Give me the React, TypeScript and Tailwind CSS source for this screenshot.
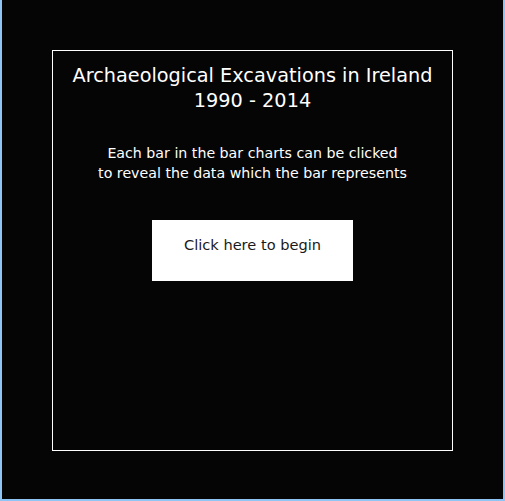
const App = () => {
  return (
    <div className="h-[501px] w-[505px] border-x-2 border-b-2 border-[#8ec5f5] bg-[#050505] pl-[50px] pt-[50px] font-['DejaVu_Sans',sans-serif]">
      <div className="flex h-[401px] w-[401px] flex-col items-center border border-white pt-[12px]">
        <h1 className="text-center text-[19.3px] leading-[25px] text-white">
          Archaeological Excavations in Ireland
          <br />
          1990 - 2014
        </h1>
        <p className="mt-[30px] text-center text-[14.2px] leading-[20px] text-white">
          Each bar in the bar charts can be clicked
          <br />
          to reveal the data which the bar represents
        </p>
        <button className="mt-[37px] h-[61px] w-[201px] bg-white pb-[12px] text-[14.6px] text-[#1a1a1a]">
          Click here to begin
        </button>
      </div>
    </div>
  );
};

export default App;
